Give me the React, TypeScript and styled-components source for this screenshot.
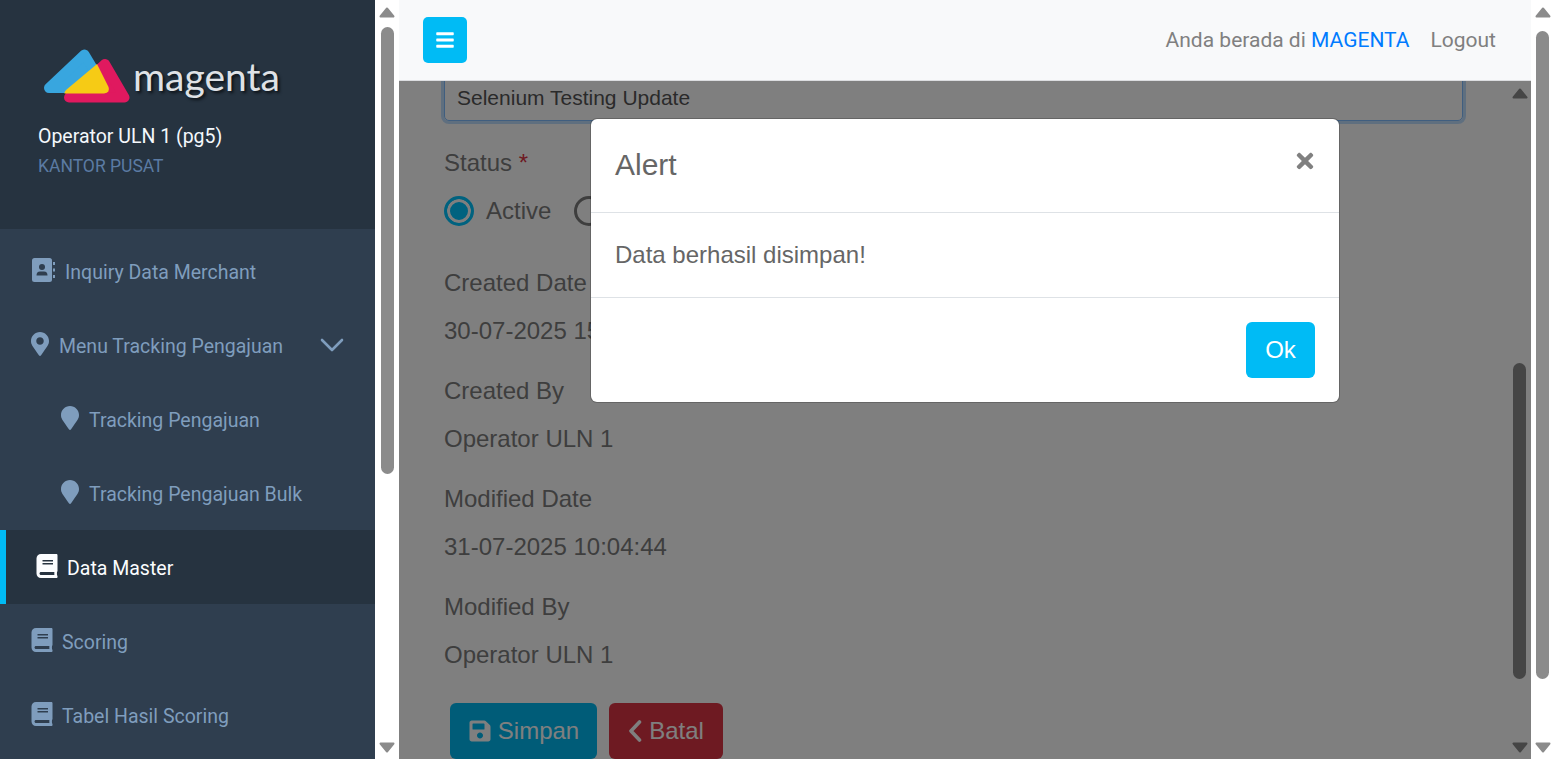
import React from "react";
import styled, { createGlobalStyle } from "styled-components";
import { FaBars, FaBook, FaMapMarker, FaMapMarkerAlt, FaSave, FaTimes } from "react-icons/fa";

const GlobalStyle = createGlobalStyle`
  html, body {
    margin: 0;
    height: 100%;
    overflow: hidden;
    background: #fff;
  }
  * {
    box-sizing: border-box;
  }
`;

const Page = styled.div`
  display: flex;
  width: 1554px;
  height: 759px;
  overflow: hidden;
  font-family: "Liberation Sans", Arial, sans-serif;
`;

const Sidebar = styled.aside`
  flex: 0 0 375px;
  display: flex;
  flex-direction: column;
  background: #2f3e4f;
  font-family: Roboto, sans-serif;
`;

const Brand = styled.div`
  height: 229px;
  flex: none;
  padding: 48px 0 0 38px;
  background: #263340;
`;

const Logo = styled.div`
  display: flex;
  align-items: center;
  margin-left: 6px;
  height: 56px;
`;

const LogoText = styled.span`
  margin-left: 2px;
  margin-top: -1px;
  font-family: Lato, sans-serif;
  font-size: 39px;
  line-height: 56px;
  color: #dfe2e6;
  text-shadow: 2px 2px 3px #0c1116;
`;

const UserName = styled.div`
  margin-top: 20px;
  font-size: 19.5px;
  line-height: 26px;
  color: #f4f8fc;
`;

const Office = styled.div`
  margin-top: 4px;
  font-size: 17.5px;
  line-height: 24px;
  color: #5b7ba3;
`;

const Nav = styled.nav`
  padding-top: 5px;
`;

const NavItem = styled.a<{ $active?: boolean; $indent: number }>`
  display: flex;
  align-items: center;
  height: 74px;
  padding-left: ${({ $indent }) => $indent}px;
  font-size: 19.5px;
  color: ${({ $active }) => ($active ? "#fbfdff" : "#7f9dbd")};
  background: ${({ $active }) => ($active ? "#263340" : "transparent")};
  border-left: ${({ $active }) => ($active ? "6px solid #00bbf5" : "0")};

  svg {
    flex: none;
    margin-top: -2px;
  }
`;

const NavLabel = styled.span<{ $gap: number }>`
  flex: 1;
  margin-left: ${({ $gap }) => $gap}px;
  margin-top: 2px;
`;

const Caret = styled.svg`
  margin-right: 31px;
  && {
    margin-top: 0;
  }
`;

const Rail = styled.div<{ $width: number; $inset?: number }>`
  flex: 0 0 ${({ $width }) => $width}px;
  display: flex;
  flex-direction: column;
  align-items: center;
  height: 100%;
  padding: 7px ${({ $inset }) => $inset ?? 0}px 6px 0;
  background: #fff;
`;

const RailArrow = styled.svg<{ $down?: boolean }>`
  flex: none;
  display: block;
  ${({ $down }) => ($down ? "margin-top: auto; transform: rotate(180deg);" : "")}
`;

const RailThumb = styled.div<{ $offset: number; $length: number }>`
  flex: none;
  width: 13px;
  height: ${({ $length }) => $length}px;
  margin-top: ${({ $offset }) => $offset}px;
  border-radius: 7px;
  background: #8b8b8b;
`;

const Main = styled.div`
  flex: 1;
  min-width: 0;
  display: flex;
  flex-direction: column;
  position: relative;
`;

const TopBar = styled.header`
  flex: 0 0 81px;
  display: flex;
  align-items: center;
  justify-content: space-between;
  padding: 0 35px 1px 24px;
  background: #f8f9fa;
  border-bottom: 1px solid #dcdde0;
  font-family: Roboto, sans-serif;
  font-size: 21px;
  color: #808080;
`;

const ToggleButton = styled.button`
  display: flex;
  align-items: center;
  justify-content: center;
  width: 44px;
  height: 46px;
  padding: 0;
  border: 0;
  border-radius: 5px;
  color: #fff;
  background: #00bbf5;
`;

const TopLinks = styled.div`
  display: flex;
  gap: 21px;
`;

const Accent = styled.span`
  color: #007bff;
`;

const Content = styled.div`
  flex: 1;
  min-height: 0;
  display: flex;
  position: relative;
  overflow: hidden;
  background: #fff;
`;

const Form = styled.div`
  flex: 1;
  min-width: 0;
  padding: 0 48px 0 45px;
  font-size: 24px;
  line-height: 30px;
  color: #7c7c7c;
`;

const TextBox = styled.div`
  height: 53px;
  margin-top: -13px;
  padding: 11px 12px 0;
  border: 1px solid #80bdff;
  border-radius: 5px;
  box-shadow: 0 0 0 3px rgba(0, 123, 255, 0.25);
  color: #555;
  font-size: 21px;
  line-height: 36px;
`;

const Field = styled.div`
  margin-top: 30px;
`;

const StatusField = styled.div`
  margin-top: 27px;
  margin-bottom: 42px;
`;

const FieldLabel = styled.div`
  margin-bottom: 18px;
`;

const Required = styled.span`
  color: #dc3545;
`;

const RadioRow = styled.div`
  display: flex;
  align-items: center;
  height: 30px;
`;

const Radio = styled.span<{ $on?: boolean }>`
  flex: none;
  width: 30px;
  height: 30px;
  margin-right: 12px;
  border-radius: 50%;
  border: 3px solid ${({ $on }) => ($on ? "#00c4ff" : "#7c7c7c")};
  background: ${({ $on }) => ($on ? "#00c4ff" : "transparent")};
  box-shadow: ${({ $on }) => ($on ? "inset 0 0 0 3px #fff" : "none")};
`;

const RadioText = styled.span`
  margin-right: 23px;
`;

const Actions = styled.div`
  display: flex;
  gap: 12px;
  margin: 33px 0 0 6px;
`;

const ActionButton = styled.button<{ $color: string; $width: number; $gap: number }>`
  display: flex;
  align-items: center;
  justify-content: center;
  gap: ${({ $gap }) => $gap}px;
  width: ${({ $width }) => $width}px;
  height: 56px;
  padding: 0;
  border: 0;
  border-radius: 6px;
  color: #fff;
  background: ${({ $color }) => $color};
  font: 24px "Liberation Sans", Arial, sans-serif;
`;

const Backdrop = styled.div`
  position: absolute;
  inset: 0;
  background: rgba(0, 0, 0, 0.5);
`;

const Modal = styled.div`
  position: absolute;
  top: 118px;
  left: 191px;
  width: 750px;
  height: 285px;
  display: flex;
  flex-direction: column;
  background: #fff;
  border: 1px solid rgba(0, 0, 0, 0.2);
  border-radius: 7px;
  background-clip: padding-box;
  color: #666;
`;

const ModalHeader = styled.div`
  flex: 0 0 94px;
  display: flex;
  align-items: flex-start;
  justify-content: space-between;
  padding: 27px 24px 0;
  border-bottom: 1px solid #dee2e6;
`;

const ModalTitle = styled.h5`
  margin: 0;
  font-size: 30px;
  font-weight: 400;
  line-height: 38px;
  color: #666;
`;

const CloseIcon = styled(FaTimes)`
  margin: 3px -2px 0 0;
  color: #808080;
`;

const ModalBody = styled.div`
  flex: 0 0 84px;
  display: flex;
  align-items: center;
  padding: 0 24px;
  font-size: 24px;
`;

const ModalFooter = styled.div`
  flex: 1;
  display: flex;
  justify-content: flex-end;
  padding: 24px 24px 0;
  border-top: 1px solid #dee2e6;
`;

const OkButton = styled.button`
  width: 69px;
  height: 56px;
  border: 0;
  border-radius: 6px;
  padding: 0;
  color: #fff;
  background: #00bbf5;
  font: 24px "Liberation Sans", Arial, sans-serif;
`;

const Arrow = ({ down, color }: { down?: boolean; color: string }) => (
  <RailArrow $down={down} width="16" height="11" viewBox="0 0 16 11">
    <path d="M8 1.5 L14.5 9.5 L1.5 9.5 Z" fill={color} stroke={color} strokeWidth="2" strokeLinejoin="round" />
  </RailArrow>
);

const ScrollRail = ({ width, offset, length, inset }: { width: number; offset: number; length: number; inset?: number }) => (
  <Rail $width={width} $inset={inset}>
    <Arrow color="#8b8b8b" />
    <RailThumb $offset={offset} $length={length} />
    <Arrow down color="#8b8b8b" />
  </Rail>
);

const LogoMark = () => (
  <svg width="87" height="56" viewBox="44 48 87 56">
    <path d="M84.5 54.5 L49 88 L104.5 88 Z" fill="#38a6df" stroke="#38a6df" strokeWidth="10" strokeLinejoin="round" />
    <path d="M105 64 L124.5 97.5 L69 97.5 Z" fill="#e0195f" stroke="#e0195f" strokeWidth="10" strokeLinejoin="round" />
    <path d="M97 64 L66 90 Q64 92 64.5 93.5 L104 93.5 Q110.5 92.5 108.5 87 Z" fill="#f6cb15" />
  </svg>
);

const ContactIcon = () => (
  <svg width="24" height="24" viewBox="0 0 24 24">
    <rect x="0" y="0" width="20" height="24" rx="2.5" fill="#7f9dbd" />
    <circle cx="10" cy="9" r="3" fill="#2f3e4f" />
    <path d="M4.5 17.5 Q4.5 13.5 8 13.5 L12 13.5 Q15.5 13.5 15.5 17.5 Z" fill="#2f3e4f" />
    <path d="M21 4 H23 V7 H21 Z M21 10.5 H23 V13.5 H21 Z M21 17 H23 V20 H21 Z" fill="#7f9dbd" />
  </svg>
);

const BackChevron = () => (
  <svg width="14" height="24" viewBox="0 0 14 24" fill="none" stroke="currentColor" strokeWidth="3.6" strokeLinecap="round" strokeLinejoin="round">
    <path d="M11.5 3 L3 12 L11.5 21" />
  </svg>
);

const Details = [
  ["Created Date", "30-07-2025 15:12:30"],
  ["Created By", "Operator ULN 1"],
  ["Modified Date", "31-07-2025 10:04:44"],
  ["Modified By", "Operator ULN 1"],
];

const App = () => (
  <Page>
    <GlobalStyle />
    <Sidebar>
      <Brand>
        <Logo>
          <LogoMark />
          <LogoText>magenta</LogoText>
        </Logo>
        <UserName>Operator ULN 1 (pg5)</UserName>
        <Office>KANTOR PUSAT</Office>
      </Brand>
      <Nav>
        <NavItem $indent={32}>
          <ContactIcon />
          <NavLabel $gap={9}>Inquiry Data Merchant</NavLabel>
        </NavItem>
        <NavItem $indent={28}>
          <FaMapMarkerAlt size={24} />
          <NavLabel $gap={7}>Menu Tracking Pengajuan</NavLabel>
          <Caret width="24" height="14" viewBox="0 0 24 14" fill="none" stroke="#7f9dbd" strokeWidth="2.6" strokeLinecap="round" strokeLinejoin="round">
            <path d="M2 2 L12 12 L22 2" />
          </Caret>
        </NavItem>
        <NavItem $indent={58}>
          <FaMapMarker size={24} />
          <NavLabel $gap={7}>Tracking Pengajuan</NavLabel>
        </NavItem>
        <NavItem $indent={58}>
          <FaMapMarker size={24} />
          <NavLabel $gap={7}>Tracking Pengajuan Bulk</NavLabel>
        </NavItem>
        <NavItem $active $indent={29}>
          <FaBook size={24} />
          <NavLabel $gap={8}>Data Master</NavLabel>
        </NavItem>
        <NavItem $indent={30}>
          <FaBook size={24} />
          <NavLabel $gap={8}>Scoring</NavLabel>
        </NavItem>
        <NavItem $indent={30}>
          <FaBook size={24} />
          <NavLabel $gap={8}>Tabel Hasil Scoring</NavLabel>
        </NavItem>
      </Nav>
    </Sidebar>
    <ScrollRail width={24} offset={9} length={447} />
    <Main>
      <TopBar>
        <ToggleButton>
          <FaBars size={20} />
        </ToggleButton>
        <TopLinks>
          <span>
            Anda berada di <Accent>MAGENTA</Accent>
          </span>
          <span>Logout</span>
        </TopLinks>
      </TopBar>
      <Content>
        <Form>
          <TextBox>Selenium Testing Update</TextBox>
          <StatusField>
            <FieldLabel>
              Status <Required>*</Required>
            </FieldLabel>
            <RadioRow>
              <Radio $on />
              <RadioText>Active</RadioText>
              <Radio />
              <RadioText>Inactive</RadioText>
            </RadioRow>
          </StatusField>
          {Details.map(([label, value]) => (
            <Field key={label}>
              <FieldLabel>{label}</FieldLabel>
              <div>{value}</div>
            </Field>
          ))}
          <Actions>
            <ActionButton $color="#00b8f0" $width={147} $gap={6}>
              <FaSave size={24} />
              Simpan
            </ActionButton>
            <ActionButton $color="#dc3545" $width={114} $gap={7}>
              <BackChevron />
              Batal
            </ActionButton>
          </Actions>
        </Form>
        <ScrollRail width={20} inset={3} offset={264} length={316} />
        <Backdrop />
      </Content>
      <Modal>
        <ModalHeader>
          <ModalTitle>Alert</ModalTitle>
          <CloseIcon size={24} />
        </ModalHeader>
        <ModalBody>Data berhasil disimpan!</ModalBody>
        <ModalFooter>
          <OkButton>Ok</OkButton>
        </ModalFooter>
      </Modal>
    </Main>
    <ScrollRail width={23} offset={13} length={648} />
  </Page>
);

export default App;
